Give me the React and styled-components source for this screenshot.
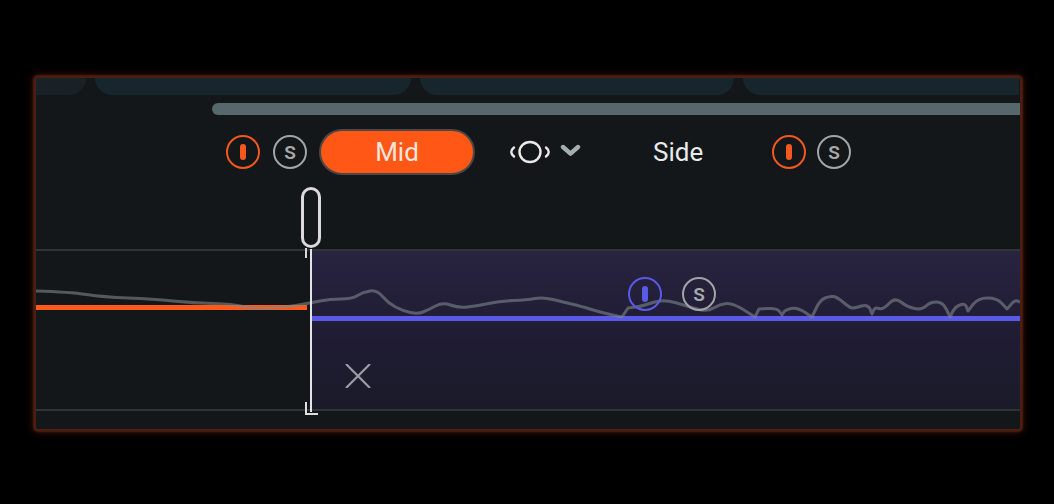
import React from 'react';
import styled, { createGlobalStyle } from 'styled-components';

const GlobalStyle = createGlobalStyle`
   html, body {
      margin:0;
      background:#000;
      font-family:Roboto, "Liberation Sans", sans-serif;
   }
`

/***** Component style *****/
const Page = styled.div`
   width:1054px;
   height:504px;
   padding:78px 34px 0 36px;
   box-sizing:border-box;
   overflow:hidden;
`
const Panel = styled.div`
   height:351px;
   display:flex;
   flex-direction:column;
   background:#14171a;
   border-radius:2px;
   box-shadow:0 0 2px 3px #4e1f12, 0 0 7px 4px rgba(90,32,16,.45);
`
const Tabs = styled.div`
   height:17px;
   display:flex;
   gap:9px;
   overflow:hidden;
   flex-shrink:0;
`
const Tab = styled.div`
   height:100%;
   width:${props => props.$width}px;
   flex-shrink:0;
   background:${props => props.$muted ? '#1a2126' : '#17252d'};
   border-radius:${props => props.$first ? '0 0 18px 0' : props.$last ? '0 0 0 18px' : '0 0 18px 18px'};
`
const Scrollbar = styled.div`
   height:12px;
   margin:8px 0 0 176px;
   background:#56686b;
   border-radius:6px 0 0 6px;
   flex-shrink:0;
`
const Controls = styled.div`
   height:46px;
   margin-top:14px;
   padding-left:190px;
   display:flex;
   align-items:center;
   flex-shrink:0;
`
const Solo = styled.div`
   width:34px;
   height:34px;
   box-sizing:border-box;
   display:flex;
   align-items:center;
   justify-content:center;
   border:2px solid ${props => props.$color};
   border-radius:50%;
   margin-left:${props => props.$gap || 0}px;
   flex-shrink:0;
`
const SoloMark = styled.span`
   width:6px;
   height:16px;
   border-radius:3px;
   background:${props => props.$color};
`
const SoloLetter = styled.span`
   font-size:19px;
   font-weight:600;
   line-height:1;
   color:#a6a9aa;
`
const MidButton = styled.div`
   width:156px;
   height:46px;
   margin-left:12px;
   box-sizing:border-box;
   display:flex;
   align-items:center;
   justify-content:center;
   background:#ff5715;
   border:2px solid #4b4745;
   border-radius:23px;
   color:#f3e6df;
   font-size:26px;
   flex-shrink:0;
`
const StereoIcon = styled.svg`
   width:44px;
   height:26px;
   margin-left:33px;
   flex-shrink:0;
`
const Chevron = styled.svg`
   width:21px;
   height:13px;
   margin:0 0 3px 8px;
   flex-shrink:0;
`
const SideLabel = styled.span`
   width:119px;
   margin-left:72px;
   color:#e8eaea;
   font-size:26px;
   flex-shrink:0;
`
const Lanes = styled.div`
   position:relative;
   height:162px;
   margin-top:74px;
   box-sizing:border-box;
   display:flex;
   border-top:2px solid #2f3436;
   border-bottom:2px solid #2f3436;
   flex-shrink:0;
`
const MidBand = styled.div`
   width:271px;
   margin-right:5px;
   padding-top:54px;
`
const SideBand = styled.div`
   flex:1;
   padding-top:65px;
   background:linear-gradient(180deg, #28233f 0%, #1f1c33 55%, #1b1a29 100%);
`
const Level = styled.div`
   position:relative;
   z-index:1;
   height:${props => props.$height}px;
   background:${props => props.$color};
`
const Wave = styled.svg`
   position:absolute;
   left:0;
   top:0;
   width:984px;
   height:158px;
   z-index:2;
`
const FloatingSolos = styled.div`
   position:absolute;
   left:592px;
   top:26px;
   z-index:3;
   display:flex;
   gap:20px;
`
const Close = styled.svg`
   position:absolute;
   left:309px;
   top:113px;
   width:26px;
   height:24px;
   z-index:3;
`
const Handle = styled.div`
   position:absolute;
   left:265px;
   top:-64px;
   width:20px;
   height:61px;
   box-sizing:border-box;
   background:#14171a;
   border:3px solid #d8dadc;
   border-radius:10px;
   z-index:4;
`
const HandleStem = styled.div`
   position:absolute;
   left:269px;
   top:-3px;
   width:2px;
   height:10px;
   background:#d4d6d8;
   z-index:4;
`
const Playhead = styled.div`
   position:absolute;
   left:273.5px;
   top:-2px;
   bottom:-3px;
   width:2.5px;
   background:#e2e4ea;
   z-index:4;
`
const Bracket = styled.div`
   position:absolute;
   left:269px;
   bottom:-6px;
   width:13px;
   height:13px;
   box-sizing:border-box;
   border-left:2px solid #dcdee0;
   border-bottom:2px solid #dcdee0;
   z-index:4;
`
/****** ******************** *****/

const ORANGE = '#f4581c';
const BLUE = '#5a5ae8';
const GREY = '#a2a5a6';

// a point listed twice stays a sharp corner in smoothPath
const wavePoints = [
   [36,291],[70,292],[103,297],[153,299],[193,303],[233,304],[253,309],[287,307],[310,303],
   [330,299],[352,299],[363,292],[377,290],[388,303],[403,311],[418,314],[428,310],[443,302],
   [458,308],[477,306],[500,301],[527,300],[543,297],[563,302],[580,306],[603,313],[622,317],[622,317],
   [628,308],[628,308],[643,306],[663,299],[687,306],[707,312],[720,304],[733,303],[755,317],[755,317],
   [759,309],[759,309],[777,308],[782,315],[782,315],[785,310],[797,307],[812,317],[812,317],[820,300],[830,296],[837,297],[850,308],
   [855,308],[868,304],[872,314],[872,314],[875,307],[883,310],[895,297],[907,307],[922,310],[930,302],
   [943,302],[950,317],[950,317],[955,307],[965,303],[968,311],[968,311],[978,298],[997,298],[1007,309],[1007,309],[1015,300],[1020,302],
];

// midpoints as anchors so the line comes out soft
const smoothPath = (points) => {
   let d = `M${points[0][0]} ${points[0][1]}`;
   for (let i = 1; i < points.length - 1; i++) {
      const mx = (points[i][0] + points[i + 1][0]) / 2;
      const my = (points[i][1] + points[i + 1][1]) / 2;
      d += ` Q${points[i][0]} ${points[i][1]} ${mx} ${my}`;
   }
   const last = points[points.length - 1];
   return `${d} L${last[0]} ${last[1]}`;
};

const SoloPair = ({ color, gap }) => (
   <>
      <Solo $color={color}><SoloMark $color={color}/></Solo>
      <Solo $color={GREY} $gap={gap}><SoloLetter>S</SoloLetter></Solo>
   </>
);

const App = () => {
   return(
      <Page>
         <GlobalStyle/>
         <Panel>
            <Tabs>
               <Tab $width={50} $muted $first/>
               <Tab $width={316}/>
               <Tab $width={314}/>
               <Tab $width={276} $last/>
            </Tabs>
            <Scrollbar/>
            <Controls>
               <SoloPair color={ORANGE} gap={13}/>
               <MidButton>Mid</MidButton>
               <StereoIcon viewBox="0 0 44 26" fill="none" stroke="#e8eaea" strokeLinecap="round">
                  <ellipse cx="22" cy="13" rx="10.5" ry="10" strokeWidth="2.4"/>
                  <path d="M6 8.5 Q0.5 13 6 17.5" strokeWidth="2.4"/>
                  <path d="M38 8.5 Q43.5 13 38 17.5" strokeWidth="2.4"/>
               </StereoIcon>
               <Chevron viewBox="0 0 21 13" fill="none" stroke="#a4afb0" strokeWidth="4.4" strokeLinecap="round" strokeLinejoin="round">
                  <path d="M3 3 L10.5 9.6 L18 3"/>
               </Chevron>
               <SideLabel>Side</SideLabel>
               <SoloPair color={ORANGE} gap={11}/>
            </Controls>
            <Lanes>
               <MidBand>
                  <Level $height={5} $color="#ff5a1a"/>
               </MidBand>
               <SideBand>
                  <Level $height={5} $color={BLUE}/>
               </SideBand>
               <Wave viewBox="36 251 984 158" fill="none">
                  <path d={smoothPath(wavePoints)} stroke="rgba(125,135,140,.6)" strokeWidth="3" strokeLinejoin="round"/>
               </Wave>
               <FloatingSolos>
                  <SoloPair color={BLUE} gap={0}/>
               </FloatingSolos>
               <Close viewBox="0 0 26 24" stroke="#9b9ba3" strokeWidth="2.2">
                  <path d="M1 0 L25 24 M25 0 L1 24"/>
               </Close>
               <Handle/>
               <HandleStem/>
               <Playhead/>
               <Bracket/>
            </Lanes>
         </Panel>
      </Page>
   )
}

export default App
